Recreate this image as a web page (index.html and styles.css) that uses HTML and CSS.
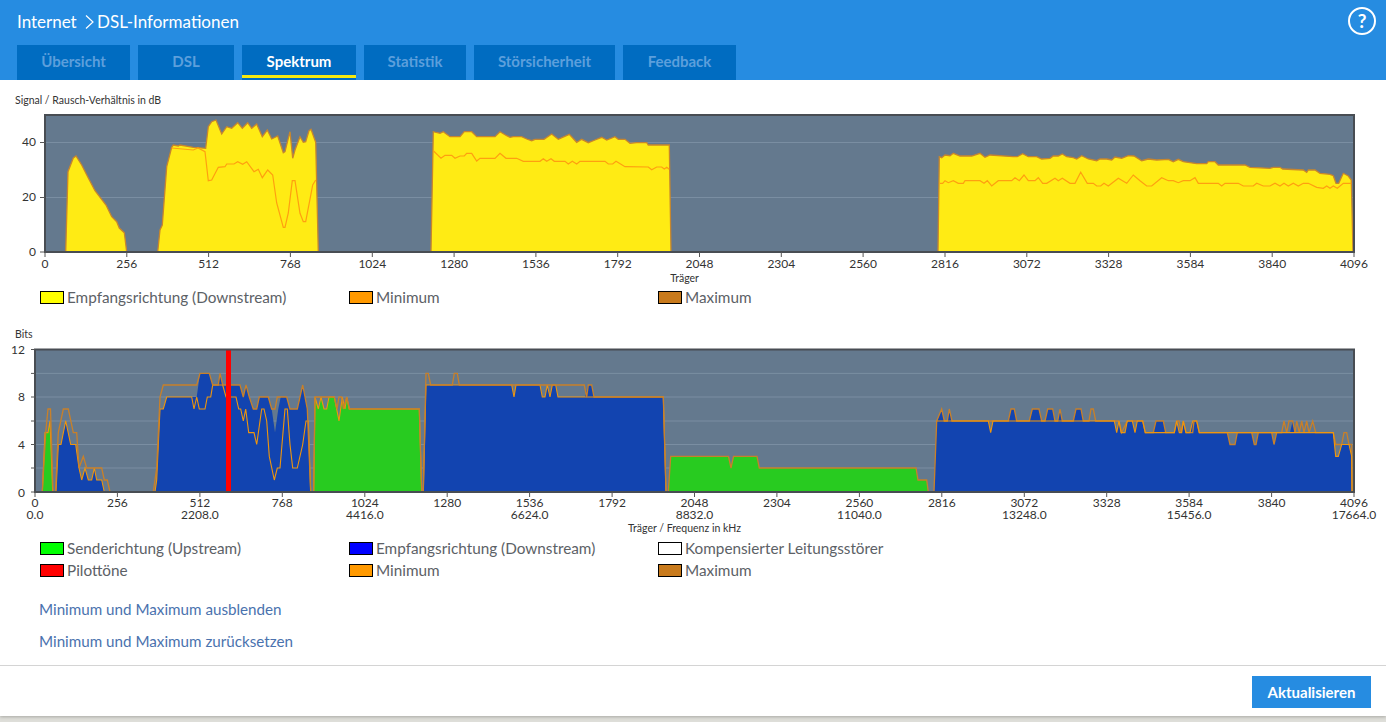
FILE: index.html
```html
<!DOCTYPE html>
<html lang="de">
<head>
<meta charset="utf-8">
<title>DSL-Informationen</title>
<link rel="stylesheet" href="styles.css">
</head>
<body>
<div class="page">
  <header class="top">
    <div class="title-row">
      <h1 class="crumb">Internet <svg class="chev" viewBox="0 0 9 16" width="9" height="16"><path d="M1 1.500 8 8 1 14.500" fill="none" stroke="#fff" stroke-width="1.2"/></svg>DSL-Informationen</h1>
      <span class="help">?</span>
    </div>
    <nav class="tabs">
      <a class="tab t1">Übersicht</a>
      <a class="tab t2">DSL</a>
      <a class="tab t3 active">Spektrum</a>
      <a class="tab t4">Statistik</a>
      <a class="tab t5">Störsicherheit</a>
      <a class="tab t6">Feedback</a>
    </nav>
  </header>

  <main class="content">
    <p class="chart-title first">Signal / Rausch-Verhältnis in dB</p>
    <svg class="chart chart-a" viewBox="0 110 1386 176" role="img">
      <rect class="plot" x="45" y="115" width="1309" height="137"/>
      <path class="grid" d="M45 142.500H1354M45 197.500H1354"/>
      <path class="fill-y" d="M65.700 252 68 171.700 73.300 158 76 156 81.700 165 88.300 178 95 190.700 106 205 111.700 216.700 116.700 221.700 119.300 228 124.300 232.700 126.700 252Z"/>
      <path class="fill-y" d="M157.700 252 160 230 162.300 225 166.700 166.700 171.700 147.300 173.300 145 178.300 146 180 145 193.300 147.300 198 147.700 205.700 148.300 208.300 126.700 211.700 121.700 216 120 221.700 134 226.700 126.700 231.700 128.300 237.700 122.700 242.300 128.300 247.700 122.700 251.700 128.300 256.700 124 262.300 136.700 267.300 130 271.700 139 277.700 136 283.300 152.700 285 151.700 290 131.700 292.700 158.300 295 150 300 136.700 303.300 142.300 305.700 141.700 309 130.700 311 129.300 315.700 142.300 318.300 252Z"/>
      <path class="fill-y" d="M431 252 433.300 131.700 440 133.300 443.300 131.700 450 136.700 460 136.700 464.300 131.700 471.700 131.700 476.700 136.700 495 136.700 500 131.700 506.700 135.700 510 137.300 513.300 136.700 521.700 136.700 526.700 139 531.700 140.700 535 139.300 544 139.300 551.700 134 558.300 139.300 569.300 134.300 576.700 142.300 581.700 139.300 588.300 142.700 595 140 601.700 137.300 606.700 140 615 136.700 618.300 139.300 625 139.300 630 143.300 636.700 142.700 646.700 142.700 648.300 145 669.300 145 671 252Z"/>
      <path class="fill-y" d="M938 252 939.300 156.700 941.700 157.700 945 155 950 155.700 953.300 153.300 960 156 971.700 156 980 153.300 985 157.300 990 155 1013.300 156.700 1017.300 156.700 1022.700 153.700 1028.300 156.700 1036.700 156.700 1041.700 159 1050 158.300 1053.300 156 1058.300 156 1062.300 154 1066.700 156.700 1073.300 157.700 1076.700 159 1081.700 155.700 1088.300 159 1096.700 160.700 1100 159 1106.700 159 1111.700 160 1115 157 1121.700 158.300 1128.300 155.700 1134 156 1141.700 160.700 1148.300 159 1156.700 160 1168.300 159.300 1173.300 161.700 1178.300 159.300 1183.300 161.700 1196.700 163.700 1206.700 163.700 1208.300 161.700 1215 161.700 1218.300 165 1245 165 1250 167.300 1270 168.300 1273.300 167.300 1280 167.300 1282.700 169 1303.300 170 1306.700 172.300 1308.300 170 1315 170 1320 173.300 1330 174.300 1333.300 175.700 1336 183.300 1338.700 183.300 1343.300 173.300 1348.300 176 1351.300 180 1353 252Z"/>
      <path class="min-a" d="M171.700 148 193.300 150 198 148 205 151.700 208.300 180.700 211.700 180 218.300 167.300 225 166.700 226.700 164 234 164 237.700 161.700 242.700 164.300 246.700 161.700 254 171.700 258.300 169.300 262.300 177.700 267.700 170 272.700 175 276.700 203 283.300 227.300 285 227.300 288.300 213 292.300 180.700 295 180.700 300 213.300 303.300 221.700 305.700 221.700 312.700 185 315.700 180"/>
      <path class="min-a" d="M433.300 150.700 441 158.300 445 155.300 451.700 155.300 455 158.300 460 156 464.300 156 466.700 153.300 471.700 153.300 476.700 161 480 158.300 495 158.300 500 153.300 506 158.300 516.700 158.300 523.300 161.300 540 161.300 543.300 158.700 546.700 161.300 551 158.700 554.300 161.300 565 161.300 568.300 164 572.300 161.300 576.700 164 580 161.300 605 161.300 608.300 164 612.700 164 616 161.300 625 166.700 648.300 167 651.700 169.700 656.700 167 661.700 167 664.300 169 666.700 167.300 669.300 169.300"/>
      <path class="min-a" d="M939.300 183.300 942.700 183.300 945 180.700 948.300 182.700 953.300 180.700 958.300 183.300 963.300 183.300 965 180.700 980 180.700 984 183.300 987.300 180.700 991.700 186 998.300 180.700 1011.700 180.700 1015 177.700 1019.300 180.700 1024 175 1028.300 180.700 1035 180.700 1038.300 177.700 1042.700 183.300 1046.700 183.300 1055 178.300 1058.300 180.700 1062.300 178.300 1070 183.300 1075 183.300 1080.700 172.300 1087.300 183.300 1093.300 183.300 1096.700 186 1100.700 186 1104 183.300 1108.300 186 1118.300 178.300 1126.700 183.300 1133.300 175 1140 180.700 1146.700 186 1151.700 186 1161.700 177.700 1168.300 180.700 1173.300 180.700 1178.300 182.700 1183.300 180.700 1190 180.700 1195 177.700 1198.300 183.300 1218.300 183.300 1221.700 186 1225 183.300 1233.300 183.300 1238.300 183.300 1243.300 186 1253.300 186 1256.700 183.300 1263.300 186 1270 186 1275 183.300 1280 186 1284 183.300 1288.300 186 1293.300 183.300 1298.300 186 1303.300 183.300 1308.300 183.300 1316.700 187.300 1323.300 188.300 1326.700 186 1330 188.300 1333.300 186 1337.300 188.300 1343.300 183.300 1351.300 183.300"/>
      <path class="axis-base" d="M45 252H1354"/>
      <rect class="frame" x="45" y="115" width="1309" height="137"/>
      <path class="ticks" d="M40 142.500H45M40 197.500H45M40 252H45M45 252V257M126.800 252V257M208.600 252V257M290.400 252V257M372.300 252V257M454.100 252V257M535.900 252V257M617.700 252V257M699.500 252V257M781.300 252V257M863.100 252V257M945 252V257M1026.800 252V257M1108.600 252V257M1190.400 252V257M1272.200 252V257M1354 252V257"/>
      <text class="lab end" x="36" y="146">40</text>
      <text class="lab end" x="36" y="201">20</text>
      <text class="lab end" x="36" y="256">0</text>
      <text class="lab" x="45" y="268">0</text><text class="lab" x="126.800" y="268">256</text><text class="lab" x="208.600" y="268">512</text><text class="lab" x="290.400" y="268">768</text><text class="lab" x="372.300" y="268">1024</text><text class="lab" x="454.100" y="268">1280</text><text class="lab" x="535.900" y="268">1536</text><text class="lab" x="617.700" y="268">1792</text><text class="lab" x="699.500" y="268">2048</text><text class="lab" x="781.300" y="268">2304</text><text class="lab" x="863.100" y="268">2560</text><text class="lab" x="945" y="268">2816</text><text class="lab" x="1026.800" y="268">3072</text><text class="lab" x="1108.600" y="268">3328</text><text class="lab" x="1190.400" y="268">3584</text><text class="lab" x="1272.200" y="268">3840</text><text class="lab" x="1354" y="268">4096</text>
      <text class="axis-name" x="684.500" y="282">Träger</text>
    </svg>
    <ul class="legend legend-a">
      <li><i class="sw yellow"></i>Empfangsrichtung (Downstream)</li>
      <li><i class="sw orange"></i>Minimum</li>
      <li><i class="sw brown"></i>Maximum</li>
    </ul>

    <p class="chart-title second">Bits</p>
    <svg class="chart chart-b" viewBox="0 340 1386 197" role="img">
      <rect class="plot" x="35" y="349.500" width="1319" height="142.500"/>
      <path class="grid" d="M35 373.400H1354M35 397H1354M35 421H1354M35 444.500H1354M35 468H1354"/>
      <path class="fill-g" d="M42.300 492 45 432.600 48 432.600 50 421 52.700 492Z"/>
      <path class="fill-b" d="M56 492 58.300 444.500 61 444.500 65.700 420.800 70.700 444.500 75.700 444.500 79 468 81.700 480 85 468 88.300 480 91.700 480 94.300 468 96.700 480 101.700 480 104.300 492Z"/>
      <path class="fill-b" d="M155 492 156.700 480 160 409 163.300 409 166.700 397 191.700 397 196.700 397 200 373.400 209.300 373.400 212.700 385 218.300 385 220 373.400 222.700 385 240 385 243.300 397 246 385 249.300 397 253.300 409 256.700 409 259.300 397 268.300 397 271.700 409 275 432.600 278.300 409 280.700 397 286.700 397 290 409 297.300 409 302.700 385 307.300 409 310.700 492Z"/>
      <path class="fill-g" d="M313.700 492 315 397 318.300 409 321 397 324 409 326.700 409 329 397 334.300 397 339 420.800 342.300 397 345 409 346.700 397 349.300 409 419.300 409 421.700 492Z"/>
      <path class="fill-b" d="M423.300 492 426 385 429.300 385 511.700 385 514 397 516 385 540 385 542.300 397 545 397 547.300 385 550 397 552.300 385 555.700 385 558 397 585 397 588.300 385 591.700 385 594 397 663.300 397 666 492Z"/>
      <path class="fill-g" d="M668.300 492 670.700 456.400 728.500 456.400 731 468 733.500 456.400 757 456.400 759.300 468 916 468 918 480 926.700 480 928.300 492Z"/>
      <path class="fill-b" d="M934 492 936.700 421 941.700 409 944.300 421 947.300 421 949.300 409 952 421 988.300 421 990.700 432.600 993 421 1008.300 421 1011 409 1014.300 409 1016.700 421 1029.300 421 1032.300 409 1039 409 1041.700 421 1045 421 1047.700 409 1052.700 409 1055 421 1057.700 421 1060 409 1062.300 421 1073.300 421 1076 409 1081 409 1083.300 421 1114.300 421 1116.700 432.600 1119 421 1121 432.600 1125 432.600 1127.300 421 1132.300 421 1135 432.600 1137.300 421 1142.700 421 1145.300 432.600 1153.300 432.600 1156 421 1163.300 421 1165.700 432.600 1174.300 432.600 1176.700 421 1179.300 432.600 1181.700 432.600 1183.300 421 1186 432.600 1190 432.600 1192.700 421 1196.700 421 1199.300 432.600 1227.300 432.600 1230 444.500 1235 444.500 1237.300 432.600 1251.700 432.600 1254.300 444.500 1256 444.500 1258.300 432.600 1271.700 432.600 1274 444.500 1276.700 432.600 1290 432.600 1292.700 421 1295 432.600 1333.300 432.600 1335.700 456.400 1338.300 456.400 1341.700 444.500 1349 444.500 1351.700 456.400 1352 492Z"/>
      <path class="min-b" d="M42.300 492 45 432.600 48 432.600 50 421 52.700 492M56 492 58.300 444.500 61 444.500 65.700 420.800 70.700 444.500 75.700 444.500 79 468 81.700 480 85 468 88.300 480 91.700 480 94.300 468 96.700 480 101.700 480 104.300 492"/>
      <path class="min-b" d="M155 492 156.700 480 160 409 163.300 409 166.700 397 191.700 397 194 409 196.700 397 199.300 409 205 409 207.300 397 210.700 397 212.700 385 222.700 385 226 397 236 397 238.700 409 240.700 409 243.300 421 245.700 409 248.700 432.600 254 432.600 256.700 444.500 261.700 409 264 409 266.700 421 269.300 456.400 274.300 480 277.300 468 280 468 285 409 287.300 409 290 444.500 292.700 468 297.300 468 302.700 444.500 306 421 308.300 421 310.700 492"/>
      <path class="min-b" d="M313.700 492 315 397 318.300 409 321 397 324 409 326.700 409 329 397 334.300 397 339 420.800 342.300 397 345 409 346.700 397 349.300 409 419.300 409 421.700 492"/>
      <path class="min-b" d="M423.300 492 426 385 429.300 385 511.700 385 514 397 516 385 540 385 542.300 397 545 397 547.300 385 550 397 552.300 385 555.700 385 558 397 594 397 663.300 397 666 492"/>
      <path class="max-b" d="M35 492H42.300L45.700 432.600 48 409 50.500 409 53 492H55.500L58.300 432.600 63.300 409 68.300 409 73.300 432.600 76.700 432.600 79 468 83.300 456.400 86.700 468 101.700 468 104.300 480 107.300 480 110 492H153.300L156.700 468 160 397 163.300 385 196.700 385 200 373.400 209.300 373.400 212.700 385 218.300 385 220 373.400 222.700 385 240 385 243.300 397 246 385 249.300 397 253.300 409 256.700 409 259.300 397 268.300 397 271.700 409 275 409 277.300 397 286.700 397 290 409 297.300 409 302.700 385 307.300 409 310.700 492H313.700L315 397 334.300 397 337 409 339 397 341.700 397 343.300 409 346.700 397 349.300 409 419.300 409 421.700 492H423.300L426 373.400 428.300 373.400 430.700 385 452.300 385 454.300 373.400 457.300 373.400 459.300 385 584.300 385 586.700 397 588.300 385 591.700 385 594 397 663.300 397 666 492H668.300L670.700 456.400 728.500 456.400 731 468 733.500 456.400 757 456.400 759.300 468 916 468 918 480 926.700 480 928.300 492H934L936.700 421 941.700 409 944.300 421 947.300 421 949.300 409 952 421 1008.300 421 1011 409 1014.300 409 1016.700 421 1029.300 421 1032.300 409 1039 409 1041.700 421 1045 421 1047.700 409 1052.700 409 1055 421 1057.700 421 1060 409 1062.300 421 1073.300 421 1076 409 1081 409 1083.300 421 1089 421 1091 409 1093.300 409 1095.700 421 1119 421 1121.700 432.600 1127.300 421 1142.700 421 1145.300 432.600 1153.300 432.600 1156 421 1163.300 421 1165.700 432.600 1174.300 432.600 1176.700 421 1179 421 1181 432.600 1183.300 421 1186 432.600 1192.700 432.600 1194 421 1196.700 421 1199.300 432.600 1227.300 432.600 1230 444.500 1235 444.500 1237.300 432.600 1251.700 432.600 1254.300 444.500 1256 444.500 1258.300 432.600 1271.700 432.600 1274 444.500 1276.700 432.600 1281.700 432.600 1284 421 1286.700 432.600 1289 421 1292.700 421 1295 432.600 1296.700 421 1299.300 432.600 1301.700 421 1304 432.600 1306.700 421 1309 432.600 1312.700 421 1315.700 432.600 1333.300 432.600 1335.700 444.500 1341.700 444.500 1344 432.600 1346.700 432.600 1349 444.500 1351.700 444.500 1352 492"/>
      <path class="min-b" d="M936.700 421 988.300 421 990.700 432.600 993 421 1114.300 421 1116.700 432.600 1119 421 1121 432.600 1125 432.600 1127.300 421 1132.300 421 1135 432.600 1137.300 421 1142.700 421 1145.300 432.600 1174.300 432.600 1176.700 421 1179.300 432.600 1181.700 432.600 1183.300 421 1186 432.600 1190 432.600 1192.700 421 1196.700 421 1199.300 432.600 1333.300 432.600 1335.700 456.400 1338.300 456.400 1341.700 444.500 1349 444.500 1351.700 456.400 1352 492"/>
      <path class="axis-base" d="M35 492H1354"/>
      <path class="axis-green" d="M155 492H311M314 492H422M423 492H666M668 492H928M934 492H1354"/>
      <rect class="pilot" x="226" y="349.500" width="5" height="142.500"/>
      <rect class="frame" x="35" y="349.500" width="1319" height="142.500"/>
      <path class="ticks" d="M31 349.500H35M31 373.400H35M31 397H35M31 421H35M31 444.500H35M31 468H35M31 492H35M35 492V497M117.400 492V497M199.900 492V497M282.300 492V497M364.800 492V497M447.200 492V497M529.600 492V497M612.100 492V497M694.500 492V497M776.900 492V497M859.400 492V497M941.800 492V497M1024.300 492V497M1106.700 492V497M1189.100 492V497M1271.600 492V497M1354 492V497"/>
      <text class="lab end" x="25" y="354">12</text>
      <text class="lab end" x="25" y="401">8</text>
      <text class="lab end" x="25" y="449">4</text>
      <text class="lab end" x="25" y="497">0</text>
      <text class="lab" x="35" y="507">0</text><text class="lab" x="117.400" y="507">256</text><text class="lab" x="199.900" y="507">512</text><text class="lab" x="282.300" y="507">768</text><text class="lab" x="364.800" y="507">1024</text><text class="lab" x="447.200" y="507">1280</text><text class="lab" x="529.600" y="507">1536</text><text class="lab" x="612.100" y="507">1792</text><text class="lab" x="694.500" y="507">2048</text><text class="lab" x="776.900" y="507">2304</text><text class="lab" x="859.400" y="507">2560</text><text class="lab" x="941.800" y="507">2816</text><text class="lab" x="1024.300" y="507">3072</text><text class="lab" x="1106.700" y="507">3328</text><text class="lab" x="1189.100" y="507">3584</text><text class="lab" x="1271.600" y="507">3840</text><text class="lab" x="1354" y="507">4096</text>
      <text class="lab" x="35" y="519">0.0</text><text class="lab" x="199.900" y="519">2208.0</text><text class="lab" x="364.800" y="519">4416.0</text><text class="lab" x="529.600" y="519">6624.0</text><text class="lab" x="694.500" y="519">8832.0</text><text class="lab" x="859.400" y="519">11040.0</text><text class="lab" x="1024.300" y="519">13248.0</text><text class="lab" x="1189.100" y="519">15456.0</text><text class="lab" x="1354" y="519">17664.0</text>
      <text class="axis-name" x="684.500" y="532">Träger / Frequenz in kHz</text>
    </svg>
    <ul class="legend legend-b">
      <li><i class="sw green"></i>Senderichtung (Upstream)</li>
      <li><i class="sw blue"></i>Empfangsrichtung (Downstream)</li>
      <li><i class="sw white"></i>Kompensierter Leitungsstörer</li>
      <li><i class="sw red"></i>Pilottöne</li>
      <li><i class="sw orange"></i>Minimum</li>
      <li><i class="sw brown"></i>Maximum</li>
    </ul>
    <div class="links">
      <a class="link">Minimum und Maximum ausblenden</a>
      <a class="link">Minimum und Maximum zurücksetzen</a>
    </div>
  </main>

  <footer class="actions">
    <button class="btn" type="button">Aktualisieren</button>
  </footer>
</div>
</body>
</html>
```

FILE: styles.css
```css
* { box-sizing: border-box; }
html, body { margin: 0; padding: 0; }
body {
  height: 722px;
  overflow: hidden;
  background: #deded9;
  font-family: "Lato", "Open Sans", sans-serif;
  color: #5c6166;
}
.page {
  height: 716px;
  background: #fff;
  display: flex;
  flex-direction: column;
  box-shadow: 0 1px 3px #a9a9a4;
}
.top {
  background: #268ce1;
  height: 80px;
  padding: 0 10px 0 17px;
  display: flex;
  flex-direction: column;
  flex: none;
}
.title-row {
  height: 45px;
  display: flex;
  justify-content: space-between;
  align-items: flex-start;
}
.crumb {
  margin: 11px 0 0;
  font-size: 17px;
  line-height: 22px;
  font-weight: 400;
  color: #fff;
  display: flex;
  align-items: center;
  white-space: pre;
}
.chev { margin-left: 4px; margin-right: 3px; }
.help {
  margin-top: 7px;
  width: 28px;
  height: 28px;
  border: 2.5px solid #fff;
  border-radius: 50%;
  color: #fff;
  font-size: 19px;
  font-weight: 700;
  line-height: 23px;
  text-align: center;
}
.tabs { display: flex; gap: 8px; height: 35px; }
.tab {
  background: #006cc1;
  color: #5c9fdc;
  font-size: 15px;
  line-height: 32px;
  font-weight: 700;
  text-align: center;
  display: block;
}
.t1 { width: 113px; }
.t2 { width: 96px; }
.t3 { width: 114px; }
.t4 { width: 102px; }
.t5 { width: 141px; }
.t6 { width: 113px; }
.tab.active {
  color: #fff;
  position: relative;
}
.tab.active::after {
  content: "";
  position: absolute;
  left: 0;
  right: 0;
  bottom: 2px;
  height: 3px;
  background: #f5e90f;
}
.content { flex: 1; min-height: 0; }
.chart-title {
  margin: 0;
  padding-left: 15px;
  font-size: 10.500px;
  line-height: 12px;
  color: #333;
}
.chart-title.first { margin-top: 14px; height: 16px; }
.chart-title.second { margin-top: 20px; height: 12px; }
.chart { display: block; width: 1386px; }
.chart-a { height: 176px; }
.chart-b { height: 197px; }
.plot { fill: #64798e; }
.grid { fill: none; stroke: #7a8ea2; stroke-width: 1; }
.fill-y { fill: #ffeb14; stroke: #c8862c; stroke-width: 1.3; }
.fill-b { fill: #1244b0; }
.fill-g { fill: #28cb20; }
.min-a { fill: none; stroke: #ff9f10; stroke-width: 1.2; }
.min-b { fill: none; stroke: #f0960c; stroke-width: 1.1; }
.max-b { fill: none; stroke: #c8802a; stroke-width: 1.3; }
.axis-base { fill: none; stroke: #70500f; stroke-width: 1.5; }
.axis-green { fill: none; stroke: #1d5f30; stroke-width: 1.5; }
.pilot { fill: #ff0000; }
.frame { fill: none; stroke: #484d53; stroke-width: 2; }
.ticks { fill: none; stroke: #555; stroke-width: 1; }
.lab {
  font-family: "Lato", sans-serif;
  font-size: 12px;
  fill: #333;
  text-anchor: middle;
}
.lab.end { text-anchor: end; }
.axis-name {
  font-family: "Lato", sans-serif;
  font-size: 10.500px;
  fill: #333;
  text-anchor: middle;
}
.legend {
  list-style: none;
  margin: 0;
  padding: 0 0 0 40px;
  display: grid;
  grid-template-columns: repeat(3, 309px);
  font-size: 15.300px;
  line-height: 22px;
}
.legend li { display: flex; align-items: center; gap: 3px; white-space: nowrap; }
.sw {
  flex: none;
  width: 24px;
  height: 13px;
  border: 1px solid #000;
}
.yellow { background: #ffff00; }
.orange { background: #ff9900; }
.brown { background: #c87a1c; }
.green { background: #00ff00; }
.blue { background: #0000ff; }
.white { background: #fff; }
.red { background: #ff0000; }
.links {
  margin-top: 17px;
  padding-left: 39px;
  display: flex;
  flex-direction: column;
  gap: 10px;
}
.link { color: #4a72ae; font-size: 15.200px; line-height: 22px; }
.actions {
  flex: none;
  height: 51px;
  border-top: 1px solid #d4d4d4;
  display: flex;
  justify-content: flex-end;
  align-items: flex-start;
  padding: 10px 15px 0 0;
}
.btn {
  width: 119px;
  height: 32px;
  background: #268ce1;
  color: #fff;
  border: 0;
  font-family: inherit;
  font-size: 15px;
  font-weight: 700;
  padding: 0;
}
```
